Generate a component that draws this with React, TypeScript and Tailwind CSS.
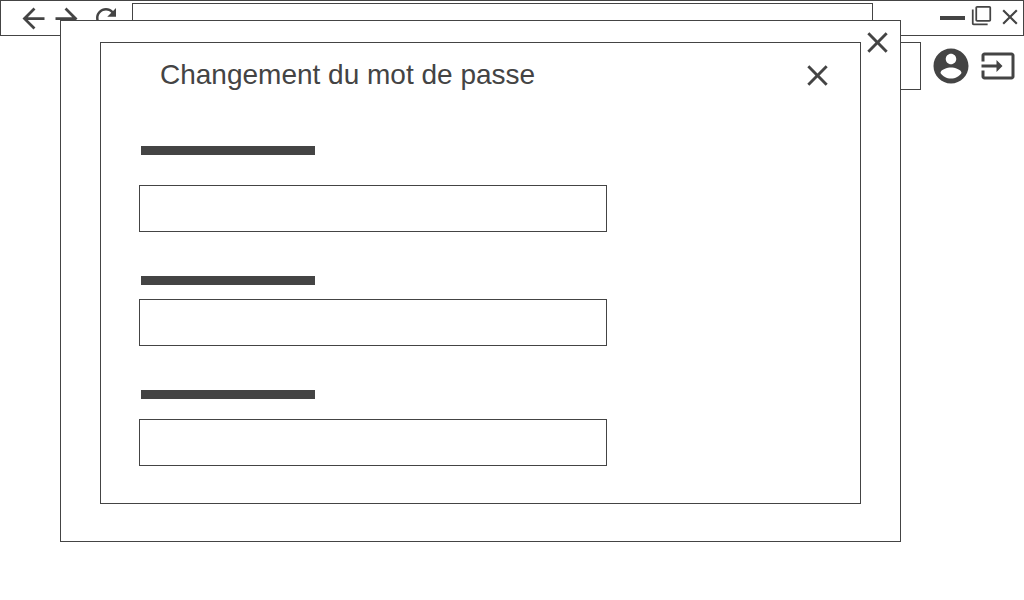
import React from "react";

const paths = {
  back: "M20 11H7.83l5.59-5.59L12 4l-8 8 8 8 1.41-1.41L7.83 13H20v-2z",
  forward: "M12 4l-1.41 1.41L16.17 11H4v2h12.17l-5.58 5.59L12 20l8-8z",
  refresh:
    "M17.65 6.35C16.2 4.9 14.21 4 12 4c-4.42 0-7.99 3.58-7.99 8s3.57 8 7.99 8c3.73 0 6.84-2.55 7.73-6h-2.08c-.82 2.33-3.04 4-5.65 4-3.31 0-6-2.69-6-6s2.69-6 6-6c1.66 0 3.14.69 4.22 1.78L13 11h7V4l-2.35 2.35z",
  close:
    "M19 6.41L17.59 5 12 10.59 6.41 5 5 6.41 10.59 12 5 17.59 6.41 19 12 13.41 17.59 19 19 17.59 13.41 12z",
  windows:
    "M3 5H1v16c0 1.1.9 2 2 2h16v-2H3V5zm18-4H7c-1.1 0-2 .9-2 2v14c0 1.1.9 2 2 2h14c1.1 0 2-.9 2-2V3c0-1.1-.9-2-2-2zm0 16H7V3h14v14z",
  account:
    "M12 2C6.48 2 2 6.48 2 12s4.48 10 10 10 10-4.48 10-10S17.52 2 12 2zm0 3c1.66 0 3 1.34 3 3s-1.34 3-3 3-3-1.34-3-3 1.34-3 3-3zm0 14.2c-2.5 0-4.71-1.28-6-3.22.03-1.99 4-3.08 6-3.08 1.99 0 5.97 1.09 6 3.08-1.29 1.94-3.5 3.22-6 3.22z",
  exit: "M21 3.01H3c-1.1 0-2 .9-2 2V9h2V4.99h18v14.03H3V15H1v4.01c0 1.1.9 1.98 2 1.98h18c1.1 0 2-.88 2-1.98v-14c0-1.11-.9-2-2-2zM11 16l4-4-4-4v3H1v2h10v3z",
};

function IconButton({
  icon,
  label,
  className,
}: {
  icon: keyof typeof paths;
  label: string;
  className: string;
}) {
  return (
    <button type="button" aria-label={label} className={`block shrink-0 ${className}`}>
      <svg viewBox="0 0 24 24" fill="currentColor" className="block size-full" aria-hidden="true">
        <path d={paths[icon]} />
      </svg>
    </button>
  );
}

const fields = [
  { id: "current", label: "Mot de passe actuel", spacing: "gap-[30px]" },
  { id: "next", label: "Nouveau mot de passe", spacing: "gap-[14px]" },
  { id: "confirm", label: "Confirmation du mot de passe", spacing: "gap-[20px]" },
];

function BrowserBar() {
  return (
    <header className="flex h-9 items-start border border-[#444] pl-4">
      <IconButton icon="back" label="Précédent" className="mt-px size-[33px]" />
      <IconButton icon="forward" label="Suivant" className="mt-px size-[33px]" />
      <IconButton icon="refresh" label="Actualiser" className="ml-2 mt-[2px] size-[30px]" />
      <input
        aria-label="Adresse"
        className="ml-[11px] mt-[2px] h-7 min-w-0 flex-1 border border-[#444] px-2 outline-none"
      />
      <div className="ml-[67px] flex h-[31px] items-center">
        <button type="button" aria-label="Réduire" className="mt-[3px] h-1 w-[25px] bg-[#444]" />
        <IconButton icon="windows" label="Agrandir" className="ml-[6px] mb-[2px] size-[21px]" />
        <IconButton icon="close" label="Fermer la fenêtre" className="ml-[5px] size-[26px]" />
      </div>
    </header>
  );
}

function PasswordDialog() {
  return (
    <div
      role="dialog"
      aria-labelledby="dialog-title"
      className="absolute left-[60px] right-[123px] top-5 border border-[#444] bg-white px-[39px] pb-[37px] pt-[21px]"
    >
      <IconButton icon="close" label="Fermer" className="absolute right-[5px] top-1 size-[35px]" />
      <form className="border border-[#444] pb-[37px] pl-[38px] pr-[25px] pt-[15px]">
        <div className="mb-[53px] flex items-start justify-between pl-[21px]">
          <h1 id="dialog-title" className="text-[28px] leading-[33px]">
            Changement du mot de passe
          </h1>
          <IconButton icon="close" label="Annuler" className="size-[35px]" />
        </div>
        <div className="flex flex-col gap-11">
          {fields.map((f) => (
            <div key={f.id} className={`flex flex-col ${f.spacing}`}>
              <label htmlFor={f.id} aria-label={f.label} className="ml-[2px] h-[9px] w-[174px] bg-[#444]" />
              <input
                id={f.id}
                type="password"
                className="h-[47px] w-full max-w-[468px] border border-[#444] px-3 outline-none"
              />
            </div>
          ))}
        </div>
      </form>
    </div>
  );
}

export default function App() {
  return (
    <div className="relative min-h-screen bg-white font-['Liberation_Sans',Arial,sans-serif] text-[#444]">
      <BrowserBar />
      <div className="flex items-center pl-[100px] pr-2 pt-[6px]">
        <input
          aria-label="Recherche"
          className="h-12 min-w-0 flex-1 border border-[#444] px-3 outline-none"
        />
        <IconButton icon="account" label="Compte" className="ml-[9px] size-[42px]" />
        <IconButton icon="exit" label="Déconnexion" className="ml-2 size-9" />
      </div>
      <PasswordDialog />
    </div>
  );
}
